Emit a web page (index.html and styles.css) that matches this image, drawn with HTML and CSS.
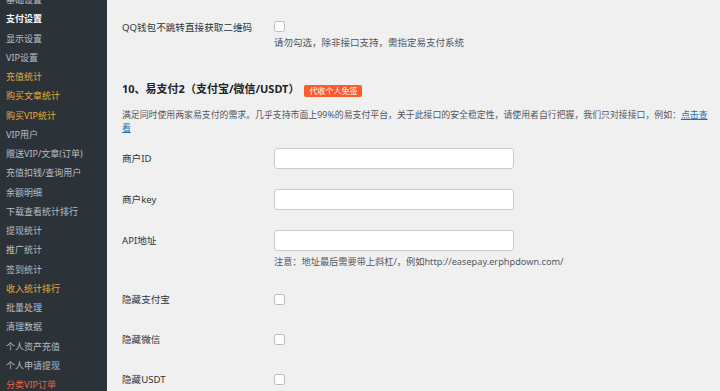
FILE: index.html
```html
<!DOCTYPE html>
<html lang="zh-CN">
<head>
<meta charset="utf-8">
<title>支付设置</title>
<link rel="stylesheet" href="styles.css">
</head>
<body>
<div class="layout">
  <nav class="sidebar">
    <ul class="menu">
      <li>基础设置</li>
      <li class="current">支付设置</li>
      <li>显示设置</li>
      <li>VIP设置</li>
      <li class="hl">充值统计</li>
      <li class="hl">购买文章统计</li>
      <li class="hl">购买VIP统计</li>
      <li>VIP用户</li>
      <li>赠送VIP/文章(订单)</li>
      <li>充值扣钱/查询用户</li>
      <li>余额明细</li>
      <li>下载查看统计排行</li>
      <li>提现统计</li>
      <li>推广统计</li>
      <li>签到统计</li>
      <li class="hl">收入统计排行</li>
      <li>批量处理</li>
      <li>清理数据</li>
      <li>个人资产充值</li>
      <li>个人申请提现</li>
      <li class="red">分类VIP订单</li>
    </ul>
  </nav>
  <main class="content">
    <div class="row-qq">
      <div class="label-top">QQ钱包不跳转直接获取二维码</div>
      <div class="field">
        <span class="checkbox"></span>
        <p class="note note-qq">请勿勾选，除非接口支持，需指定易支付系统</p>
      </div>
    </div>

    <h2 class="section-title">10、易支付2（支付宝/微信/USDT）<span class="badge">代收个人免签</span></h2>
    <p class="section-desc">满足同时使用两家易支付的需求。几乎支持市面上99%的易支付平台，关于此接口的安全稳定性，请使用者自行把握，我们只对接接口，例如：<a href="#" class="link">点击查看</a></p>

    <div class="row-input">
      <div class="label-input">商户ID</div>
      <div class="field"><input class="text" type="text"></div>
    </div>
    <div class="row-input">
      <div class="label-input">商户key</div>
      <div class="field"><input class="text" type="text"></div>
    </div>
    <div class="row-input row-last">
      <div class="label-input">API地址</div>
      <div class="field">
        <input class="text" type="text">
        <p class="note note-api">注意：地址最后需要带上斜杠/，例如http://easepay.erphpdown.com/</p>
      </div>
    </div>
    <div class="row-check">
      <div class="label">隐藏支付宝</div>
      <div class="field"><span class="checkbox"></span></div>
    </div>
    <div class="row-check">
      <div class="label">隐藏微信</div>
      <div class="field"><span class="checkbox"></span></div>
    </div>
    <div class="row-check">
      <div class="label">隐藏USDT</div>
      <div class="field"><span class="checkbox"></span></div>
    </div>
  </main>
</div>
</body>
</html>
```

FILE: styles.css
```css
* { box-sizing: border-box; }
html, body {
  margin: 0;
  padding: 0;
  height: 100%;
  overflow: hidden;
}
body {
  font-family: "Noto Sans", "Noto Sans CJK SC", sans-serif;
  background: #f0f0f1;
  color: #1d2327;
}
.layout {
  display: flex;
  height: 391px;
}
.sidebar {
  width: 107px;
  flex: none;
  background: #2c3338;
  overflow: hidden;
}
.menu {
  list-style: none;
  margin: -10px 0 0;
  padding: 0;
}
.menu li {
  height: 19.25px;
  line-height: 19.25px;
  padding-left: 6px;
  font-size: 9px;
  color: #b9bdc1;
  white-space: nowrap;
}
.menu li.current { color: #fff; font-weight: 700; }
.menu li.hl { color: #e8a93a; }
.menu li.red { color: #ea6246; }

.content {
  flex: 1;
  padding: 21px 8px 0 15px;
  min-width: 0;
}
.row-qq, .row-input, .row-check {
  display: grid;
  grid-template-columns: 152px 1fr;
}
.label-top {
  font-size: 9.6px;
  line-height: 14px;
  color: #2c3338;
}
.field { min-width: 0; }
.checkbox {
  display: block;
  width: 11px;
  height: 11px;
  border: 1px solid #b8bbbf;
  border-radius: 2.5px;
  background: #fff;
}
.note {
  margin: 0;
  font-size: 9.5px;
  line-height: 13px;
  color: #50575e;
  white-space: nowrap;
}
.note-qq { margin-top: 3.5px; }
.note-api { margin-top: 3.5px; font-size: 9.2px; }

.section-title {
  margin: 32.5px 0 0;
  font-size: 11px;
  line-height: 16px;
  font-weight: 700;
  color: #1d2327;
  display: flex;
  align-items: center;
}
.badge {
  display: inline-block;
  margin-left: 5px;
  margin-top: 3px;
  height: 12px;
  line-height: 12px;
  padding: 0 5px;
  font-size: 8px;
  font-weight: 400;
  color: #fff;
  background: #ff5a2b;
  border-radius: 2px;
}
.section-desc {
  margin: 10.5px 0 0;
  font-size: 8.9px;
  line-height: 13px;
  color: #50575e;
}
.link { color: #2271b1; text-decoration: underline; }

.section-desc + .row-input { margin-top: 4.5px; }
.row-input {
  padding: 10px 0;
}
.row-last { padding-bottom: 12px; }
.label-input {
  font-size: 9.6px;
  line-height: 21px;
  color: #2c3338;
}
.text {
  display: block;
  width: 240px;
  height: 21px;
  margin: 0;
  border: 1px solid #c9cbce;
  border-radius: 3px;
  background: #fff;
  padding: 0 6px;
  font: inherit;
}
.row-check {
  padding: 14.5px 0;
  align-items: center;
}
.label {
  font-size: 9.6px;
  line-height: 11px;
  color: #2c3338;
}
```
